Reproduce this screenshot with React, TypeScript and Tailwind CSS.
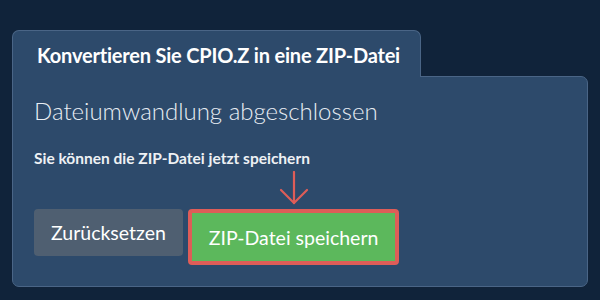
export default function App() {
  return (
    <div className="w-[600px] h-[300px] bg-[#10233a] pt-[30px] px-[12px] font-['Lato',sans-serif]">
      {/* Tab header */}
      <div className="relative z-10 -mb-px w-[409px] h-[47px] pt-[12px] px-6 bg-[#2d4a6b] border border-b-0 border-[#4a6586] rounded-t-[7px]">
        <h2 className="text-[20px] leading-[1.2] font-bold text-white whitespace-nowrap tracking-[-0.2px]">
          Konvertieren Sie CPIO.Z in eine ZIP-Datei
        </h2>
      </div>

      {/* Panel */}
      <div className="h-[211px] bg-[#2d4a6b] border border-[#4a6586] rounded-b-[7px] rounded-tr-[7px] px-[21px] pt-[20px]">
        <h3 className="text-[24px] leading-[1.2] font-light text-[#e8edf3]">
          Dateiumwandlung abgeschlossen
        </h3>
        <p className="mt-[23px] text-[15.5px] leading-[1.2] font-bold text-[#eef1f4] whitespace-nowrap">
          Sie können die ZIP-Datei jetzt speichern
        </p>

        <div className="mt-[42px] flex items-start gap-[5px]">
          <button className="h-[47px] px-[17px] rounded-[4px] bg-[#4f5f71] text-white text-[19.5px] whitespace-nowrap">
            Zurücksetzen
          </button>
          <div className="relative">
            {/* annotation arrow */}
            <svg
              className="absolute left-1/2 -translate-x-1/2 bottom-full mb-[4px]"
              width="30"
              height="34"
              viewBox="0 0 30 34"
              fill="none"
              stroke="#de5d58"
              strokeWidth={2.2}
              strokeLinecap="round"
            >
              <path d="M15 1 L15 32" />
              <path d="M2 19 L15 32 L28 19" />
            </svg>
            <button className="h-[56px] px-[17px] rounded-[4px] bg-[#5cb85c] border-[4px] border-[#de5d58] text-white text-[19.5px] whitespace-nowrap">
              ZIP-Datei speichern
            </button>
          </div>
        </div>
      </div>
    </div>
  );
}
